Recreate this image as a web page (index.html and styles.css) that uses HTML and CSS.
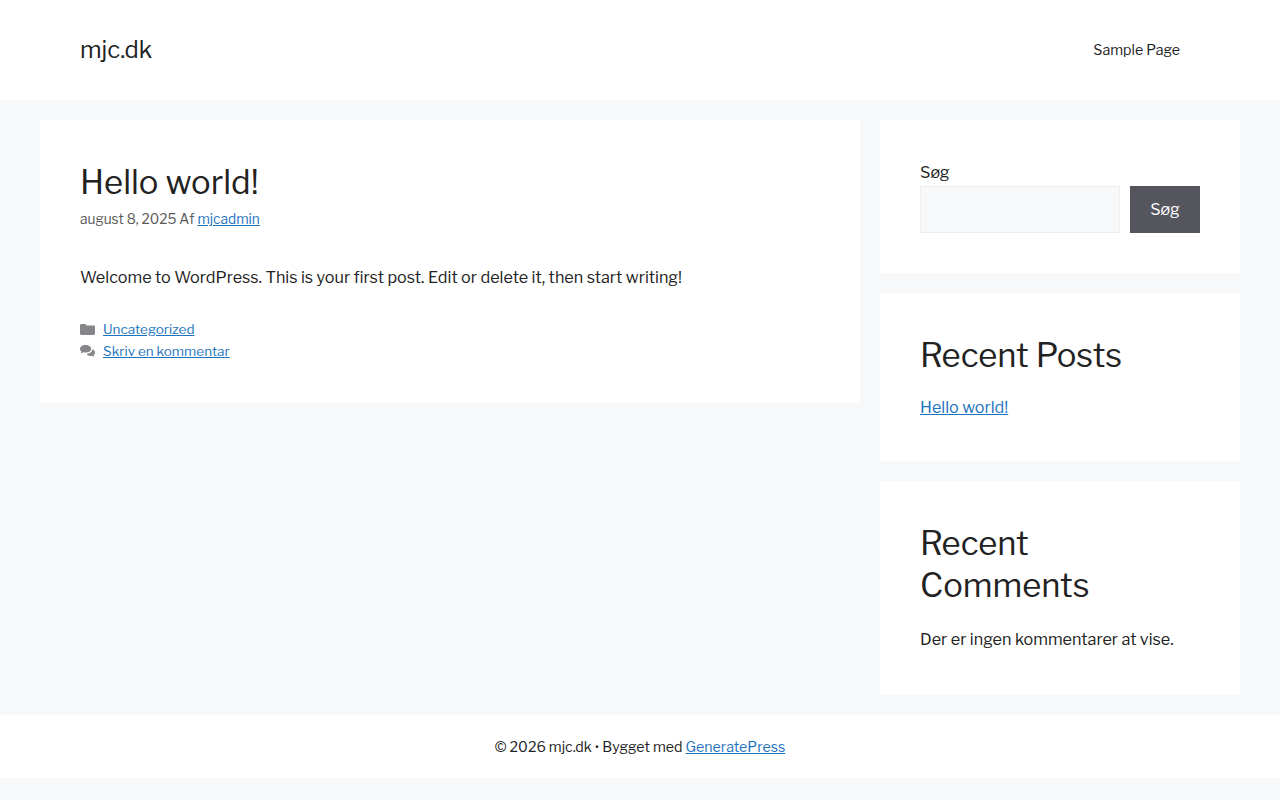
FILE: index.html
```html
<!DOCTYPE html>
<html lang="da">
<head>
<meta charset="utf-8">
<title>mjc.dk</title>
<link rel="stylesheet" href="styles.css">
</head>
<body>
<header class="site-header">
  <a class="site-title" href="#">mjc.dk</a>
  <nav class="nav"><a href="#">Sample Page</a></nav>
</header>
<div class="site-content">
  <main class="main">
    <article class="card post">
      <h2 class="post-title">Hello world!</h2>
      <div class="post-meta">august 8, 2025 Af <a href="#">mjcadmin</a></div>
      <p class="post-body">Welcome to WordPress. This is your first post. Edit or delete it, then start writing!</p>
      <footer class="post-foot">
        <div class="foot-row">
          <svg class="foot-icon" viewBox="0 0 15 15"><path d="M1.400 2h3.900l1.500 1.600h6.800c.8 0 1.400.6 1.400 1.400v6.600c0 .8-.6 1.400-1.400 1.400H1.400C.6 13 0 12.400 0 11.600V3.400C0 2.600.6 2 1.400 2z"/></svg>
          <a href="#">Uncategorized</a>
        </div>
        <div class="foot-row">
          <svg class="foot-icon" viewBox="0 0 15 15"><path d="M5.600 1C2.500 1 0 2.700 0 4.900c0 1.100.6 2 1.600 2.700-.2.700-.6 1.300-1.100 1.800 1.100-.1 2-.5 2.800-1.100.7.200 1.500.3 2.300.3 3.100 0 5.600-1.700 5.600-3.800S8.700 1 5.600 1z"/><path d="M12.500 5.100c.1 2.700-2.700 4.600-6 4.800.7 1.200 2.300 2 4.100 2 .6 0 1.100-.1 1.600-.2.600.5 1.400.9 2.300 1-.4-.5-.7-1-.8-1.600.8-.6 1.300-1.400 1.300-2.300 0-1.600-.9-2.900-2.500-3.700z"/></svg>
          <a href="#">Skriv en kommentar</a>
        </div>
      </footer>
    </article>
  </main>
  <aside class="sidebar">
    <section class="card widget search-widget">
      <label class="search-label" for="s">Søg</label>
      <div class="search-row">
        <input class="search-input" id="s" type="text">
        <button class="search-btn" type="button">Søg</button>
      </div>
    </section>
    <section class="card widget">
      <h2 class="widget-title">Recent Posts</h2>
      <a class="widget-link" href="#">Hello world!</a>
    </section>
    <section class="card widget">
      <h2 class="widget-title">Recent Comments</h2>
      <p class="widget-text">Der er ingen kommentarer at vise.</p>
    </section>
  </aside>
</div>
<footer class="site-footer"><span>© 2026 mjc.dk • Bygget med <a href="#">GeneratePress</a></span></footer>
</body>
</html>
```
FILE: styles.css
```css
* { box-sizing: border-box; }
html, body { margin: 0; padding: 0; }
body {
  background: #f7f8f9;
  color: #222222;
  font-family: "Libre Franklin", "Liberation Sans", sans-serif;
  font-size: 16.2px;
  line-height: 1.5;
}
a { color: #1e73be; }
.site-header {
  background: #fff;
  height: 100px;
  padding: 0 100px 0 80px;
  display: flex;
  align-items: center;
  justify-content: space-between;
}
.site-title { font-size: 23.800px; color: #222; text-decoration: none; }
.nav { padding-bottom: 1px; }
.nav a { font-size: 14.200px; color: #222; text-decoration: none; }
.site-content {
  display: flex;
  gap: 20px;
  padding: 20px 40px;
  align-items: flex-start;
}
.main { width: 820px; }
.card { background: #fff; }
.post { padding: 40px; height: 283px; }
.post-title { margin: 1px 0 0; font-size: 32.800px; font-weight: 400; line-height: 42px; }
.post-meta { font-size: 13.700px; color: #595959; line-height: 22px; margin-top: 5px; }
.post-body { margin: 34px 0 0; line-height: 26px; }
.post-foot { margin-top: 28px; font-size: 13.500px; }
.foot-row { display: flex; align-items: center; gap: 8px; height: 22px; }
.foot-icon { width: 15px; height: 15px; fill: #85858a; }
.sidebar { width: 360px; display: flex; flex-direction: column; gap: 20px; }
.widget { padding: 40px; }
.search-label { display: block; line-height: 26px; margin: -1px 0 1px; }
.search-row { display: flex; gap: 10px; }
.search-input { width: 200px; height: 47px; background: #f7f8f9; border: 1px solid #eee; }
.search-btn { width: 70px; height: 47px; background: #55555e; color: #fff; border: 0; font: inherit; }
.widget-title { margin: 1px 0 18px; font-size: 32.800px; font-weight: 400; line-height: 42px; }
.widget-link { display: block; line-height: 26px; margin-bottom: 1px; }
.widget-text { margin: 20px 0 3px; line-height: 26px; }
.site-footer { background: #fff; height: 63px; display: flex; align-items: center; justify-content: center; font-size: 14.200px; }
```
